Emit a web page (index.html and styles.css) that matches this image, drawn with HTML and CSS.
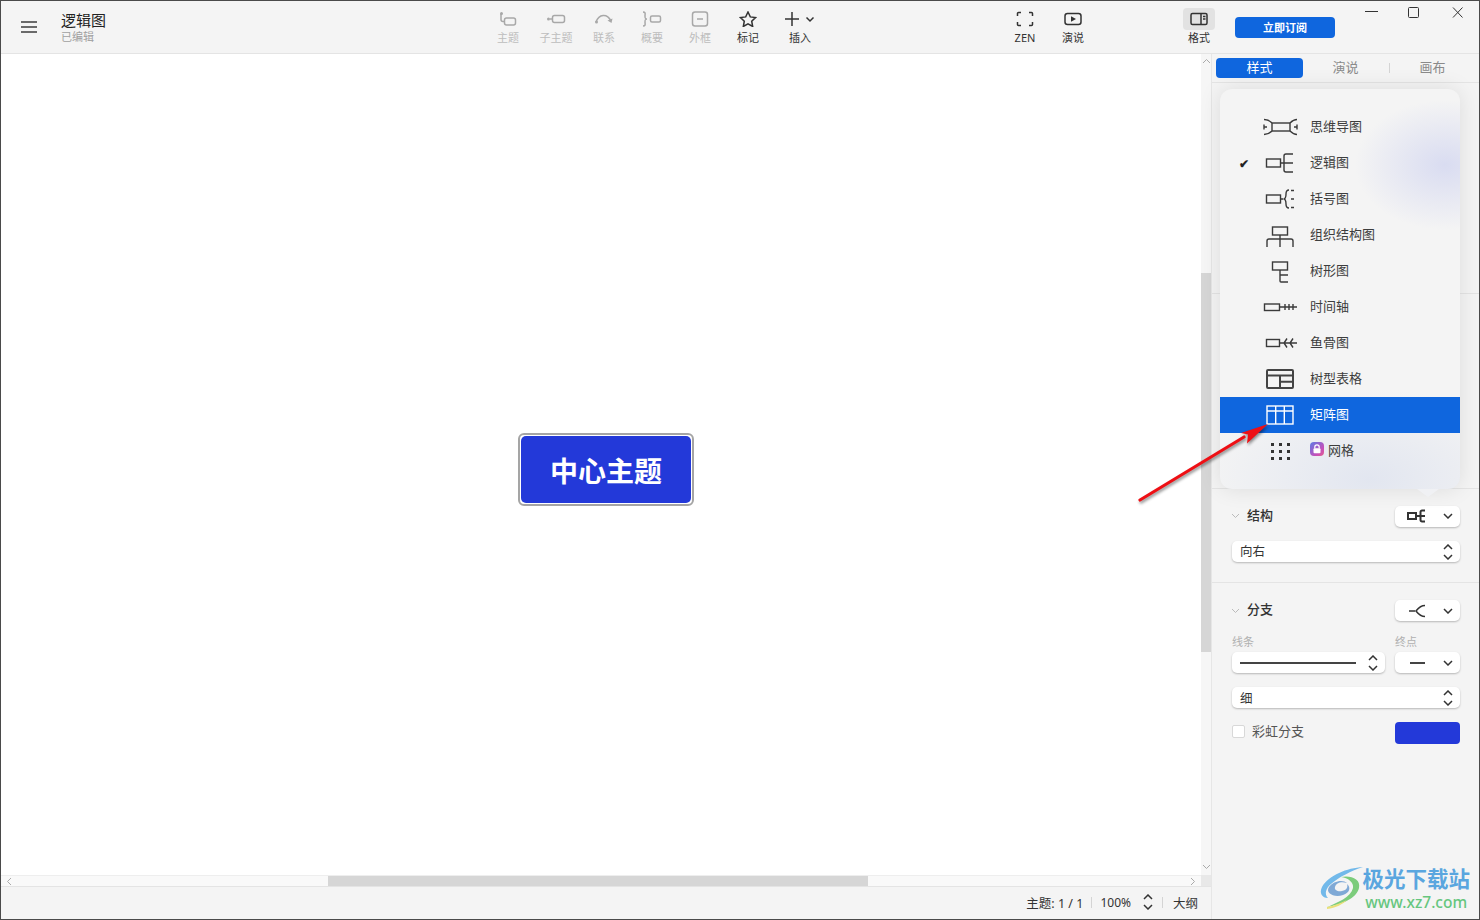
FILE: index.html
```html
<!DOCTYPE html>
<html lang="zh-CN">
<head>
<meta charset="utf-8">
<title>逻辑图</title>
<link rel="stylesheet" href="styles.css">
</head>
<body>
<div class="window">
  <header class="topbar">
    <div class="doc">
      <svg class="menu" width="16" height="12" viewBox="0 0 16 12"><path d="M0 1h16M0 6h16M0 11h16"/></svg>
      <div class="doc-text">
        <div class="doc-title">逻辑图</div>
        <div class="doc-sub">已编辑</div>
      </div>
    </div>
    <div class="tools">
      <div class="tool off"><svg width="18" height="16" viewBox="0 0 18 16"><path d="M2 3v5.500a2 2 0 0 0 2 2H5.500"/><circle cx="2.500" cy="2.500" r="1.500" class="solid"/><rect x="5.500" y="7" width="11" height="7" rx="2"/></svg><span>主题</span></div>
      <div class="tool off"><svg width="20" height="16" viewBox="0 0 20 16"><circle cx="2.500" cy="8" r="1.500" class="solid"/><path d="M4 8h2"/><rect x="6.500" y="4.500" width="12" height="7" rx="2"/></svg><span>子主题</span></div>
      <div class="tool off"><svg width="20" height="16" viewBox="0 0 20 16"><path d="M2 11C5 3 13 2 17 10"/><circle cx="2.500" cy="11" r="1.500" class="solid"/><path d="M13.500 9.500l4 2.500 1-4.500z" class="solid"/></svg><span>联系</span></div>
      <div class="tool off"><svg width="20" height="16" viewBox="0 0 20 16"><path d="M1 1c3 0 2 2 2 4s0 3 2 3c-2 0-2 1-2 3s1 4-2 4"/><rect x="8.500" y="5" width="10" height="6" rx="1.500"/></svg><span>概要</span></div>
      <div class="tool off"><svg width="18" height="16" viewBox="0 0 18 16"><rect x="1.500" y="1" width="15" height="14" rx="2.500"/><path d="M6 8h6"/></svg><span>外框</span></div>
      <div class="tool"><svg width="18" height="16" viewBox="0 0 18 16"><path d="M9 1l2.300 4.900 5.200.7-3.800 3.600 1 5.300L9 12.900l-4.700 2.600 1-5.300L1.500 6.600l5.200-.7z"/></svg><span>标记</span></div>
      <div class="tool wide"><svg width="30" height="16" viewBox="0 0 30 16"><path d="M0 8h14M7 1v14M21.500 6.500l3.500 3.500 3.500-3.500"/></svg><span>插入</span></div>
      <div class="tool first-right"><svg width="18" height="16" viewBox="0 0 18 16"><path d="M1.500 5V2.500a1 1 0 0 1 1-1H5M13 1.500h2.500a1 1 0 0 1 1 1V5M16.500 11v2.500a1 1 0 0 1-1 1H13M5 14.500H2.500a1 1 0 0 1-1-1V11"/></svg><span>ZEN</span></div>
      <div class="tool"><svg width="18" height="16" viewBox="0 0 18 16"><rect x="1" y="2.500" width="16" height="11" rx="2.500"/><path d="M7 5.200l5 2.800-5 2.800z" class="solid"/></svg><span>演说</span></div>
      <div class="tool format"><span class="tool-active"><svg width="18" height="16" viewBox="0 0 18 16"><rect x="1" y="2.500" width="16" height="11" rx="1.500"/><path d="M11 2.500v11M13 5.500h2.500M13 8h2.500"/></svg></span><span>格式</span></div>
    </div>
    <button class="subscribe">立即订阅</button>
    <div class="winctl">
      <svg width="44" height="14" viewBox="0 0 44 14"><path d="M18 5.500h13"/></svg>
      <svg width="44" height="14" viewBox="0 0 44 14"><rect x="17.500" y="1.500" width="10" height="10" rx="1"/></svg>
      <svg width="44" height="14" viewBox="0 0 44 14"><path d="M18 1.500l9.500 10M27.500 1.500L18 11.500"/></svg>
    </div>
  </header>

  <div class="main">
    <div class="work">
      <div class="canvas-grid">
        <div class="canvas">
          <div class="node"><div class="node-inner">中心主题</div></div>
        </div>
        <div class="vscroll">
          <svg class="sc-a" width="9" height="6" viewBox="0 0 9 6"><path d="M1 5l3.500-3.500L8 5"/></svg>
          <div class="vthumb"></div>
          <svg class="sc-b" width="9" height="6" viewBox="0 0 9 6"><path d="M1 1l3.500 3.500L8 1"/></svg>
        </div>
        <div class="hscroll">
          <svg class="sc-l" width="6" height="9" viewBox="0 0 6 9"><path d="M5 1L1.500 4.500 5 8"/></svg>
          <div class="hthumb"></div>
          <svg class="sc-r" width="6" height="9" viewBox="0 0 6 9"><path d="M1 1l3.500 3.500L1 8"/></svg>
        </div>
        <div class="corner"></div>
      </div>
      <footer class="status">
        <span>主题: 1 / 1</span><i class="sep"></i>
        <span class="pct">100%</span>
        <svg class="updown zoomud" width="10" height="16" viewBox="0 0 10 16"><path d="M1 5l4-4 4 4M1 11l4 4 4-4"/></svg>
        <i class="sep"></i>
        <span>大纲</span>
      </footer>
    </div>

    <aside class="side">
      <nav class="tabs">
        <div class="tab on">样式</div>
        <div class="tab">演说</div>
        <i class="tab-sep"></i>
        <div class="tab">画布</div>
      </nav>
      <div class="hidden-sec first"></div>
      <div class="hidden-sec second"></div>

      <section class="sec structure">
        <div class="sec-head">
          <svg class="caret" width="9" height="6" viewBox="0 0 9 6"><path d="M1 1l3.500 3.500L8 1"/></svg>
          <h3>结构</h3>
          <div class="sel mini">
            <svg class="bold" width="20" height="14" viewBox="0 0 20 14"><rect x="1" y="4" width="8" height="6"/><path d="M9 7h4M18 1.500h-3a1.500 1.500 0 0 0-1.500 1.500v8a1.500 1.500 0 0 0 1.500 1.500h3M13.500 7H18"/></svg>
            <svg class="chev" width="10" height="6" viewBox="0 0 10 6"><path d="M1 1l4 4 4-4"/></svg>
          </div>
        </div>
        <div class="sel full"><span>向右</span><svg class="updown" width="10" height="16" viewBox="0 0 10 16"><path d="M1 5l4-4 4 4M1 11l4 4 4-4"/></svg></div>
      </section>

      <section class="sec branch">
        <div class="sec-head">
          <svg class="caret" width="9" height="6" viewBox="0 0 9 6"><path d="M1 1l3.500 3.500L8 1"/></svg>
          <h3>分支</h3>
          <div class="sel mini">
            <svg width="20" height="14" viewBox="0 0 20 14"><path d="M2 7h6M18 1.500c-5 0-7 3-9 5.500 2 2.500 4 5.500 9 5.500"/></svg>
            <svg class="chev" width="10" height="6" viewBox="0 0 10 6"><path d="M1 1l4 4 4-4"/></svg>
          </div>
        </div>
        <div class="two">
          <div class="col-line">
            <label>线条</label>
            <div class="sel line"><i class="stroke"></i><svg class="updown" width="10" height="16" viewBox="0 0 10 16"><path d="M1 5l4-4 4 4M1 11l4 4 4-4"/></svg></div>
          </div>
          <div class="col-end">
            <label>终点</label>
            <div class="sel mini"><i class="dash"></i><svg class="chev" width="10" height="6" viewBox="0 0 10 6"><path d="M1 1l4 4 4-4"/></svg></div>
          </div>
        </div>
        <div class="sel full thin"><span>细</span><svg class="updown" width="10" height="16" viewBox="0 0 10 16"><path d="M1 5l4-4 4 4M1 11l4 4 4-4"/></svg></div>
        <div class="rainbow">
          <i class="check"></i><span>彩虹分支</span>
          <i class="swatch"></i>
        </div>
      </section>
    </aside>
  </div>

  <div class="popover">
    <div class="row"><b></b><svg width="40" height="24" viewBox="0 0 40 24"><rect x="12" y="8" width="18" height="8"/><path d="M12 8C9 5 7 4.500 4 4.500M12 16c-3 3-5 3.500-8 3.500M30 8c3-3 5-3.500 7-3.500M30 16c3 3 5 3.500 7 3.500M4 9.500v5M37 9.500v5M4 12h3M34 12h3"/></svg><span>思维导图</span></div>
    <div class="row"><b>✔</b><svg width="40" height="24" viewBox="0 0 40 24"><rect x="6.500" y="8" width="14" height="8"/><path d="M20.500 12H33M33 3h-7a2 2 0 0 0-2 2v14a2 2 0 0 0 2 2h7"/></svg><span>逻辑图</span></div>
    <div class="row"><b></b><svg width="40" height="24" viewBox="0 0 40 24"><rect x="6.500" y="8" width="14" height="8"/><path d="M20.500 12H23M29 3c-3 0-3 2-3 4s0 5-2.500 5c2.500 0 2.500 3 2.500 5s0 4 3 4M31 3.500h3M31 12h3M31 20.500h3"/></svg><span>括号图</span></div>
    <div class="row"><b></b><svg width="40" height="24" viewBox="0 0 40 24"><rect x="12.500" y="4" width="15" height="8"/><path d="M20 12v12M7 24v-6a2 2 0 0 1 2-2h22a2 2 0 0 1 2 2v6"/></svg><span>组织结构图</span></div>
    <div class="row"><b></b><svg width="40" height="24" viewBox="0 0 40 24"><rect x="12.500" y="3" width="15" height="8"/><path d="M20 11v11a1 1 0 0 0 1 1h7M20 16h8"/></svg><span>树形图</span></div>
    <div class="row"><b></b><svg width="40" height="24" viewBox="0 0 40 24"><rect x="4.500" y="9" width="15" height="6.500"/><path d="M19.500 12H37M25 9v6M29 9v6M33 9v6"/></svg><span>时间轴</span></div>
    <div class="row"><b></b><svg width="40" height="24" viewBox="0 0 40 24"><rect x="6.500" y="8.500" width="13" height="7"/><path d="M19.500 12H37M27 7.500l-3 4.500 3 4.500M33 7.500l-3 4.500 3 4.500"/></svg><span>鱼骨图</span></div>
    <div class="row heavy"><b></b><svg width="40" height="24" viewBox="0 0 40 24"><rect x="7" y="3" width="26" height="18" rx="1"/><path d="M7 8.500h26M20 8.500V21M20 14.700h13"/></svg><span>树型表格</span></div>
    <div class="row sel-row"><b></b><svg width="40" height="24" viewBox="0 0 40 24"><rect x="7" y="3" width="26" height="18"/><path d="M7 8h26M15.700 3v18M24.300 3v18"/></svg><span>矩阵图</span></div>
    <div class="row"><b></b><svg width="40" height="24" viewBox="0 0 40 24" class="dots"><path d="M11 5.500h3M19 5.500h3M27 5.500h3M11 12.500h3M19 12.500h3M27 12.500h3M11 19.500h3M19 19.500h3M27 19.500h3"/></svg><span class="locked"><i class="lock"><svg width="14" height="14" viewBox="0 0 14 14"><path d="M4.800 6.500V5a2.200 2.200 0 0 1 4.400 0v1.500"/><rect x="3.500" y="6.300" width="7" height="5" rx="1"/></svg></i>网格</span></div>
  </div>

  <svg class="arrow" width="150" height="100" viewBox="0 0 150 100"><path d="M9 90L113 27" class="shaft"/><path d="M137 14L110 23l7 1.500-1 9z" class="head"/></svg>

  <div class="watermark">
    <svg width="46" height="44" viewBox="0 0 46 44">
      <path d="M44 2C28 3 10 10 3 22c-3 6 0 11 6 11-4-4-2-10 3-14C20 12 32 6 44 2z" fill="#72b9ea"/>
      <path d="M10 22c4-6 14-8 18-4-6-2-11 0-12 4-1 3 3 5 7 4 5-1 6-4 5-7 4 3 3 9-4 11-9 3-18-2-14-8z" fill="#7fa9d6"/>
      <path d="M22 12c10-2 20 2 18 11-2 10-18 17-32 19 10-4 24-10 26-19 1-6-5-10-12-11z" fill="#7ccc7c"/>
      <path d="M8 42c6-1 14-4 20-7-4 4-11 8-20 9z" fill="#e9e07a"/>
    </svg>
    <div class="wm-text">
      <div class="wm-cn">极光下载站</div>
      <div class="wm-en">www.xz7.com</div>
    </div>
  </div>
</div>
</body>
</html>
```

FILE: styles.css
```css
* { box-sizing: border-box; }
html, body { margin: 0; padding: 0; }
body {
  width: 1480px;
  height: 920px;
  overflow: hidden;
  font-family: "Noto Sans", "Noto Sans CJK SC", sans-serif;
  color: #333;
}
svg { display: block; fill: none; stroke: currentColor; stroke-width: 1.5; }
svg .solid { fill: currentColor; stroke: none; }
.window {
  position: relative;
  width: 1480px;
  height: 920px;
  border: 1px solid #4a4a4a;
  display: flex;
  flex-direction: column;
  background: #f4f4f4;
  overflow: hidden;
}

/* top bar */
.topbar {
  flex: 0 0 53px;
  display: flex;
  background: #f4f4f4;
  border-bottom: 1px solid #e4e4e4;
}
.doc {
  flex: 0 0 483px;
  display: flex;
  align-items: flex-start;
  padding: 0 0 0 20px;
}
.menu { margin-top: 20px; color: #3c3c3c; stroke-width: 1.6; }
.doc-text { margin-left: 24px; padding-top: 9px; }
.doc-title { font-size: 15px; line-height: 20px; color: #222; }
.doc-sub { font-size: 11px; line-height: 14px; color: #a0a0a0; }
.tools { display: flex; flex: 0 0 739px; }
.tool {
  flex: 0 0 48px;
  display: flex;
  flex-direction: column;
  align-items: center;
  color: #333;
  font-size: 11px;
  line-height: 14px;
  padding-top: 10px;
}
.tool svg { height: 16px; }
.tool > span:last-child { margin-top: 4px; }
.tool.off { color: #bdbdbd; }
.tool.off svg { color: #a8a8a8; }
.tool.wide { flex-basis: 56px; }
.first-right { margin-left: 173px; }
.format { margin-left: 78px; padding-top: 7px; }
.tool-active {
  width: 32px;
  height: 22px;
  background: #e2e2e2;
  border-radius: 4px;
  display: flex;
  align-items: center;
  justify-content: center;
}
.format > span:last-child { margin-top: 1px; }
.subscribe {
  flex: 0 0 100px;
  align-self: flex-start;
  margin: 16px 0 0 12px;
  height: 21px;
  border: 0;
  border-radius: 4px;
  background: #0f66de;
  color: #fff;
  font: 700 11px/21px "Noto Sans", "Noto Sans CJK SC", sans-serif;
  padding: 0;
}
.winctl { display: flex; flex: 0 0 132px; margin: 5px 0 0 12px; color: #333; }
.winctl svg { stroke-width: 1; }

/* main */
.main { flex: 1; display: flex; min-height: 0; }
.work { flex: 0 0 1211px; display: flex; flex-direction: column; border-right: 1px solid #e6e6e6; }
.canvas-grid {
  flex: 1;
  display: grid;
  grid-template-columns: 1fr 10px;
  grid-template-rows: 1fr 11px;
  min-height: 0;
  border-bottom: 1px solid #e4e4e4;
}
.canvas { position: relative; background: #fff; }
.node {
  position: absolute;
  left: 517px;
  top: 379px;
  width: 176px;
  height: 73px;
  border: 2px solid #a5a5a5;
  border-radius: 6px;
  background: #fff;
  padding: 1px;
}
.node-inner {
  height: 100%;
  background: #2339d9;
  border-radius: 5px;
  color: #fff;
  font: 700 28px/68px "Noto Sans CJK SC", sans-serif;
  text-align: center;
}
.vscroll { background: #f6f6f6; display: flex; flex-direction: column; align-items: center; color: #aaa; }
.vscroll svg { stroke-width: 1; }
.sc-a { margin-top: 4px; }
.vthumb { width: 10px; height: 379px; margin-top: 209px; background: #d6d6d6; }
.sc-b { margin-top: 212px; }
.hscroll { background: #f9f9f9; border-top: 1px solid #eee; display: flex; align-items: center; color: #aaa; position: relative; padding-left: 5px; }
.hscroll svg { stroke-width: 1; }
.hthumb { width: 540px; height: 10px; margin-left: 316px; background: #d6d6d6; }
.sc-r { margin-left: 322px; }
.corner { background: #e8e8e8; }
.status {
  flex: 0 0 32px;
  display: flex;
  align-items: center;
  justify-content: flex-end;
  padding: 0 13px 2px 0;
  font-size: 12.5px;
  color: #333;
  background: #f4f4f4;
}
.pct { font-size: 12px; }
.sep { width: 1px; height: 11px; background: #d4d4d4; margin: 0 8px; }
.zoomud { margin: 0 0 0 12px; }
.zoomud + .sep { margin: 0 10px 0 9px; }

/* sidebar */
.side { flex: 1; display: flex; flex-direction: column; background: #f4f4f4; }
.tabs {
  flex: 0 0 29px;
  display: flex;
  align-items: center;
  padding: 0 4px 0 4px;
  border-bottom: 1px solid #e4e4e4;
  font-size: 13px;
  color: #8a8a8a;
}
.tab { flex: 0 0 87px; height: 20px; line-height: 18px; text-align: center; border-radius: 4px; }
.tab.on { background: #0f66de; color: #fff; line-height: 19px; margin-right: -1px; }
.tab-sep { width: 1px; height: 10px; background: #d4d4d4; margin-right: -1px; }
.hidden-sec.first { flex: 0 0 211px; border-bottom: 1px solid #e4e4e4; }
.hidden-sec.second { flex: 0 0 195px; border-bottom: 1px solid #e4e4e4; }
.sec { padding: 0 21px 0 20px; }
.structure { padding-top: 16px; height: 94px; border-bottom: 1px solid #e4e4e4; }
.structure .full span { margin-bottom: 2px; }
.branch { padding-top: 17px; }
.sec-head { display: flex; align-items: center; height: 22px; }
.branch .sec-head { height: 21px; }
.caret { color: #bbb; stroke-width: 1; margin-left: -1px; }
.sec-head h3 { margin: 0 0 4px 7px; font-size: 13px; font-weight: 500; color: #333; flex: 1; }
.sel {
  display: flex;
  align-items: center;
  justify-content: space-between;
  height: 21px;
  background: #fff;
  border-radius: 5px;
  box-shadow: 0 1px 2px rgba(0, 0, 0, .25);
  font-size: 12.5px;
  color: #333;
  padding: 0 7px 0 8px;
}
.sel.mini { width: 65px; padding: 0 7px 0 12px; }
.sel.mini .chev { stroke-width: 1.5; }
.sel .bold { stroke-width: 2; }
.sel.full { margin-top: 14px; }
.two { display: flex; gap: 10px; margin-top: 14px; }
.col-line { width: 153px; }
.col-end { width: 65px; }
.two label { display: block; font-size: 11px; line-height: 13px; color: #b0b0b0; margin-bottom: 4px; }
.stroke { width: 116px; height: 2px; background: #444; }
.dash { width: 15px; height: 2px; background: #444; margin-left: 3px; }
.sel.thin { margin-top: 14px; }
.rainbow { display: flex; align-items: center; margin-top: 13px; font-size: 13px; color: #555; }
.rainbow span { margin-bottom: 4px; }
.check { width: 13px; height: 13px; border: 1px solid #d8d8d8; border-radius: 2px; background: #fff; margin: 0 7px 2px 0; }
.swatch { width: 65px; height: 22px; background: #2339d9; border-radius: 4px; margin-left: auto; }

/* layer popover */
.popover {
  position: absolute;
  left: 1219px;
  top: 88px;
  width: 240px;
  height: 400px;
  padding-top: 20px;
  border-radius: 12px;
  background:
    radial-gradient(90px 65px at 225px 76px, #d9dcf1 0, rgba(217, 220, 241, 0) 100%),
    radial-gradient(170px 90px at 150px 390px, #e2e6f0 0, rgba(226, 230, 240, 0) 100%),
    #f4f4f4;
  box-shadow: 0 0 22px rgba(0, 0, 0, .10);
  font-size: 13px;
  color: #555;
}
.popover::after {
  content: "";
  position: absolute;
  left: 197px;
  top: 100%;
  width: 22px;
  height: 8px;
  background: #f0f1f4;
  clip-path: polygon(0 0, 100% 0, 50% 100%);
}
.row { display: flex; align-items: center; height: 36px; padding-left: 18px; color: #3d3d3d; }
.row b { flex: 0 0 12px; font-size: 12px; font-weight: 700; color: #222; text-align: center; margin-right: 10px; }
.row svg { flex: 0 0 40px; stroke-width: 1.4; color: #3a3a3a; }
.row > span { margin: 0 0 4px 10px; }
.row.heavy svg { stroke-width: 2; color: #444; }
.sel-row { background: #0f66de; color: #fff; }
.row.sel-row svg { color: #fff; }
.row .dots { stroke-width: 3; color: #333; }
.locked { display: flex; align-items: center; }
.lock {
  width: 14px;
  height: 14px;
  border-radius: 4px;
  background: linear-gradient(135deg, #5b7be6, #c94fb8 70%, #e25f8a);
  margin-right: 4px;
}
.row .lock svg { color: #fff; stroke-width: 1.2; }
.row .lock rect { fill: #fff; stroke: none; }

/* annotation arrow */
.arrow {
  position: absolute;
  left: 1130px;
  top: 409px;
  filter: drop-shadow(1px 2px 1.5px rgba(0, 0, 0, .45));
}
.arrow .shaft { stroke: #ee0f14; stroke-width: 3.2; stroke-linecap: round; }
.arrow .head { fill: #ee0f14; stroke: none; }

/* watermark */
.watermark {
  position: absolute;
  right: 9px;
  bottom: 6px;
  display: flex;
  align-items: flex-start;
}
.watermark svg { stroke: none; }
.wm-text { margin-left: -3px; text-align: center; }
.wm-cn { font: 700 21.5px/26px "Noto Sans CJK SC", sans-serif; color: #5aa6df; }
.wm-en { font: 500 15.5px/22px "Noto Sans", sans-serif; color: #66c67e; }
```
